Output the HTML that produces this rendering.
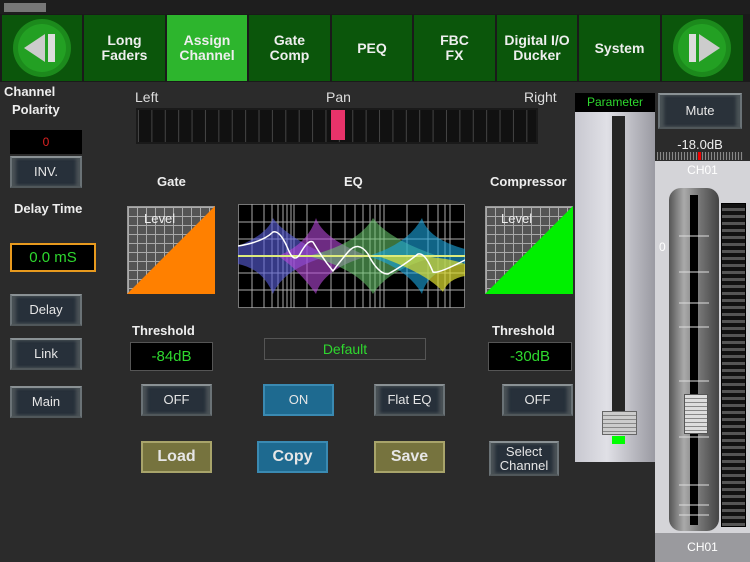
<!DOCTYPE html>
<html><head><style>
*{margin:0;padding:0;box-sizing:border-box}
body{width:750px;height:562px;background:#2b2b2b;position:relative;overflow:hidden;font-family:"Liberation Sans",sans-serif;color:#fff}
.a{position:absolute}
.tab{position:absolute;top:15px;height:66px;background:#0b560b;display:flex;align-items:center;justify-content:center;text-align:center;font-weight:bold;font-size:14px;line-height:15px;color:#eee}
.btn{position:absolute;background:#27303a;border:2px solid #6a7276;border-top-color:#8a9194;border-bottom-color:#50575a;display:flex;align-items:center;justify-content:center;font-size:13px;color:#e6e6e6;text-align:center;line-height:14px;box-shadow:inset 4px 0 3px #4a5256,inset -4px 0 3px #4a5256}
.lbl{position:absolute;font-weight:bold;font-size:13px;color:#eee;text-align:center}
.disp{position:absolute;background:#000;border:1px solid #555;color:#2ed82e;font-size:15px;display:flex;align-items:center;justify-content:center;font-weight:bold}
.grid{position:absolute;background-color:#555;background-image:linear-gradient(#aaa 1px,transparent 1px),linear-gradient(90deg,#aaa 1px,transparent 1px);background-size:9px 9px;border:1px solid #999}
</style></head><body>
<div class="a" style="left:0;top:0;width:750px;height:14px;background:#1e1e1e"></div>
<div class="a" style="left:4px;top:3px;width:42px;height:9px;background:#777"></div>
<div class="a" style="left:0;top:14px;width:750px;height:68px;background:#1a1a1a"></div>
<div class="tab" style="left:2px;width:80px"></div>
<svg class="a" style="left:10px;top:18px" width="64" height="60"><circle cx="32" cy="30" r="29" fill="#1c8a1c"/><circle cx="32" cy="30" r="24" fill="#23a023"/><polygon points="14,30 35,16 35,44" fill="#ccc"/><rect x="38" y="16" width="7" height="28" fill="#ddd"/></svg>
<div class="tab" style="left:84px;width:81px">Long<br>Faders</div>
<div class="tab" style="left:167px;width:80px;background:#2db52d">Assign<br>Channel</div>
<div class="tab" style="left:249px;width:81px">Gate<br>Comp</div>
<div class="tab" style="left:332px;width:80px">PEQ</div>
<div class="tab" style="left:414px;width:81px">FBC<br>FX</div>
<div class="tab" style="left:497px;width:80px">Digital I/O<br>Ducker</div>
<div class="tab" style="left:579px;width:81px">System</div>
<div class="tab" style="left:662px;width:81px"></div>
<svg class="a" style="left:670px;top:18px" width="64" height="60"><circle cx="32" cy="30" r="29" fill="#1c8a1c"/><circle cx="32" cy="30" r="24" fill="#23a023"/><rect x="19" y="16" width="7" height="28" fill="#ddd"/><polygon points="29,16 50,30 29,44" fill="#ccc"/></svg>

<div class="lbl" style="left:4px;top:84px;text-align:left">Channel</div>
<div class="lbl" style="left:12px;top:102px">Polarity</div>
<div class="a" style="left:10px;top:130px;width:72px;height:24px;background:#000;color:#d22;font-size:12px;text-align:center;line-height:24px">0</div>
<div class="btn" style="left:10px;top:156px;width:72px;height:32px">INV.</div>
<div class="lbl" style="left:14px;top:201px">Delay Time</div>
<div class="disp" style="left:10px;top:243px;width:86px;height:29px;border:2px solid #e89a1e;font-weight:normal;font-size:15px">0.0 mS</div>
<div class="btn" style="left:10px;top:294px;width:72px;height:32px">Delay</div>
<div class="btn" style="left:10px;top:338px;width:72px;height:32px">Link</div>
<div class="btn" style="left:10px;top:386px;width:72px;height:32px">Main</div>

<div class="a" style="left:135px;top:89px;font-size:14px;color:#ddd">Left</div>
<div class="a" style="left:326px;top:89px;font-size:14px;color:#ddd">Pan</div>
<div class="a" style="left:524px;top:89px;font-size:14px;color:#ddd">Right</div>
<div class="a" style="left:136px;top:108px;width:402px;height:36px;background:#111;border:2px solid #1a1a1a;background-image:linear-gradient(90deg,#444 1px,transparent 1px);background-size:13.4px 100%"></div>
<div class="a" style="left:331px;top:110px;width:14px;height:30px;background:#e8336a"></div>

<div class="lbl" style="left:157px;top:174px">Gate</div>
<div class="lbl" style="left:344px;top:174px">EQ</div>
<div class="lbl" style="left:490px;top:174px">Compressor</div>
<div class="grid" style="left:127px;top:206px;width:88px;height:88px"></div>
<svg class="a" style="left:127px;top:206px" width="88" height="88"><polygon points="0,88 88,0 88,88" fill="#ff8000"/></svg>
<div class="a" style="left:144px;top:211px;font-size:13px;color:#eee">Level</div>
<div class="grid" style="left:485px;top:206px;width:88px;height:88px"></div>
<svg class="a" style="left:485px;top:206px" width="88" height="88"><polygon points="0,88 88,0 88,88" fill="#00f000"/></svg>
<div class="a" style="left:501px;top:211px;font-size:13px;color:#eee">Level</div>

<svg class="a" style="left:238px;top:204px" width="227" height="104">
<rect width="227" height="104" fill="#000" stroke="#777" stroke-width="2"/>
<g stroke="#aaa" stroke-width="1"><line x1="0" y1="18" x2="227" y2="18"/><line x1="0" y1="35" x2="227" y2="35"/><line x1="0" y1="52" x2="227" y2="52"/><line x1="0" y1="69" x2="227" y2="69"/><line x1="0" y1="86" x2="227" y2="86"/>
<path d="M14 0V104M26 0V104M34 0V104M40 0V104M45 0V104M49 0V104M53 0V104M56 0V104M69 0V104M93 0V104M107 0V104M117 0V104M125 0V104M132 0V104M137 0V104M142 0V104M146 0V104M169 0V104M190 0V104M200 0V104M207 0V104M212 0V104"/></g>
<path d="M0 42Q30 30 35 14Q45 30 90 52Q45 65 35 90Q25 65 0 60Z" fill="#5a5fdd" opacity=".6"/>
<path d="M40 52Q70 40 78 14Q85 35 130 52Q85 65 78 90Q60 65 40 52Z" fill="#b548d8" opacity=".6"/>
<path d="M70 52Q120 40 135 14Q150 35 200 52Q150 65 135 90Q120 65 70 52Z" fill="#6cd070" opacity=".55"/>
<path d="M130 52Q170 40 184 14Q190 35 227 45V60Q190 65 184 90Q170 65 130 52Z" fill="#1aa7e0" opacity=".6"/>
<path d="M140 52Q200 50 227 60V72Q210 75 205 88Q190 70 140 52Z" fill="#e0e030" opacity=".7"/>
<line x1="0" y1="52" x2="227" y2="52" stroke="#ddeb7c" stroke-width="2"/>
<path d="M0 42Q25 38 35 28Q42 26 50 45Q56 60 62 50Q70 35 75 38Q85 55 95 67Q100 60 110 48Q120 36 130 50Q140 70 150 70Q165 62 180 50Q187 48 195 68Q200 70 227 56" fill="none" stroke="#fff" stroke-width="1.5"/>
</svg>

<div class="lbl" style="left:132px;top:323px">Threshold</div>
<div class="lbl" style="left:492px;top:323px">Threshold</div>
<div class="disp" style="left:130px;top:342px;width:83px;height:29px;font-weight:normal">-84dB</div>
<div class="disp" style="left:488px;top:342px;width:84px;height:29px;font-weight:normal">-30dB</div>
<div class="a" style="left:264px;top:338px;width:162px;height:22px;border:1px solid #555;color:#2ed82e;font-size:14px;text-align:center;line-height:20px">Default</div>

<div class="btn" style="left:141px;top:384px;width:71px;height:32px">OFF</div>
<div class="btn" style="left:263px;top:384px;width:71px;height:32px;background:#1e6a90;border-color:#3a8ab2;box-shadow:none">ON</div>
<div class="btn" style="left:374px;top:384px;width:71px;height:32px">Flat EQ</div>
<div class="btn" style="left:502px;top:384px;width:71px;height:32px">OFF</div>
<div class="btn" style="left:141px;top:441px;width:71px;height:32px;background:#76733e;border-color:#a8a46a;box-shadow:none;font-weight:bold;font-size:16px">Load</div>
<div class="btn" style="left:257px;top:441px;width:71px;height:32px;background:#1e6a90;border-color:#3a8ab2;box-shadow:none;font-weight:bold;font-size:16px">Copy</div>
<div class="btn" style="left:374px;top:441px;width:71px;height:32px;background:#76733e;border-color:#a8a46a;box-shadow:none;font-weight:bold;font-size:16px">Save</div>
<div class="btn" style="left:489px;top:441px;width:70px;height:35px">Select<br>Channel</div>

<div class="a" style="left:575px;top:93px;width:80px;height:19px;background:#000;color:#2ed82e;font-size:12px;text-align:center;line-height:19px">Parameter</div>
<div class="a" style="left:575px;top:112px;width:80px;height:350px;background:linear-gradient(90deg,#c8c8d0,#e0e0e6 40%,#9a9aa2)"></div>
<div class="a" style="left:612px;top:116px;width:13px;height:300px;background:#252525"></div>
<div class="a" style="left:602px;top:411px;width:35px;height:24px;background:repeating-linear-gradient(#ccc 0 3px,#888 3px 4px);border:1px solid #666"></div>
<div class="a" style="left:612px;top:436px;width:13px;height:8px;background:#0f0"></div>

<div class="btn" style="left:658px;top:93px;width:84px;height:36px;background:#2a323a">Mute</div>
<div class="a" style="left:658px;top:137px;width:84px;text-align:center;font-size:13px;color:#eee">-18.0dB</div>
<div class="a" style="left:657px;top:152px;width:86px;height:8px;background:repeating-linear-gradient(90deg,#888 0 1px,#333 1px 3px)"></div>
<div class="a" style="left:698px;top:152px;width:3px;height:8px;background:#e00"></div>
<div class="a" style="left:655px;top:161px;width:95px;height:401px;background:#d4d4d8"></div>
<div class="a" style="left:655px;top:163px;width:95px;text-align:center;font-size:12px;color:#fff">CH01</div>
<div class="a" style="left:655px;top:533px;width:95px;height:29px;background:#9a9a9e;text-align:center;line-height:29px;font-size:12px;color:#fff">CH01</div>
<div class="a" style="left:659px;top:240px;font-size:12px;color:#fff">0</div>
<div class="a" style="left:669px;top:188px;width:50px;height:343px;border-radius:12px;background:linear-gradient(90deg,#555,#aaa 30%,#777 60%,#444)"></div>
<div class="a" style="left:690px;top:195px;width:8px;height:330px;background:#000"></div>
<svg class="a" style="left:679px;top:190px" width="30" height="340"><g stroke="#ddd" stroke-width="1"><path d="M0 46H30M0 82H30M0 113H30M0 137H30M0 191H30M0 247H30M0 295H30M0 315H30M0 325H30"/></g></svg>
<div class="a" style="left:684px;top:394px;width:24px;height:40px;background:repeating-linear-gradient(#ddd 0 3px,#888 3px 4px);border:1px solid #555"></div>
<div class="a" style="left:721px;top:203px;width:25px;height:324px;background:repeating-linear-gradient(#111 0 4px,#555 4px 7px);border:1px solid #000"></div>
</body></html>
